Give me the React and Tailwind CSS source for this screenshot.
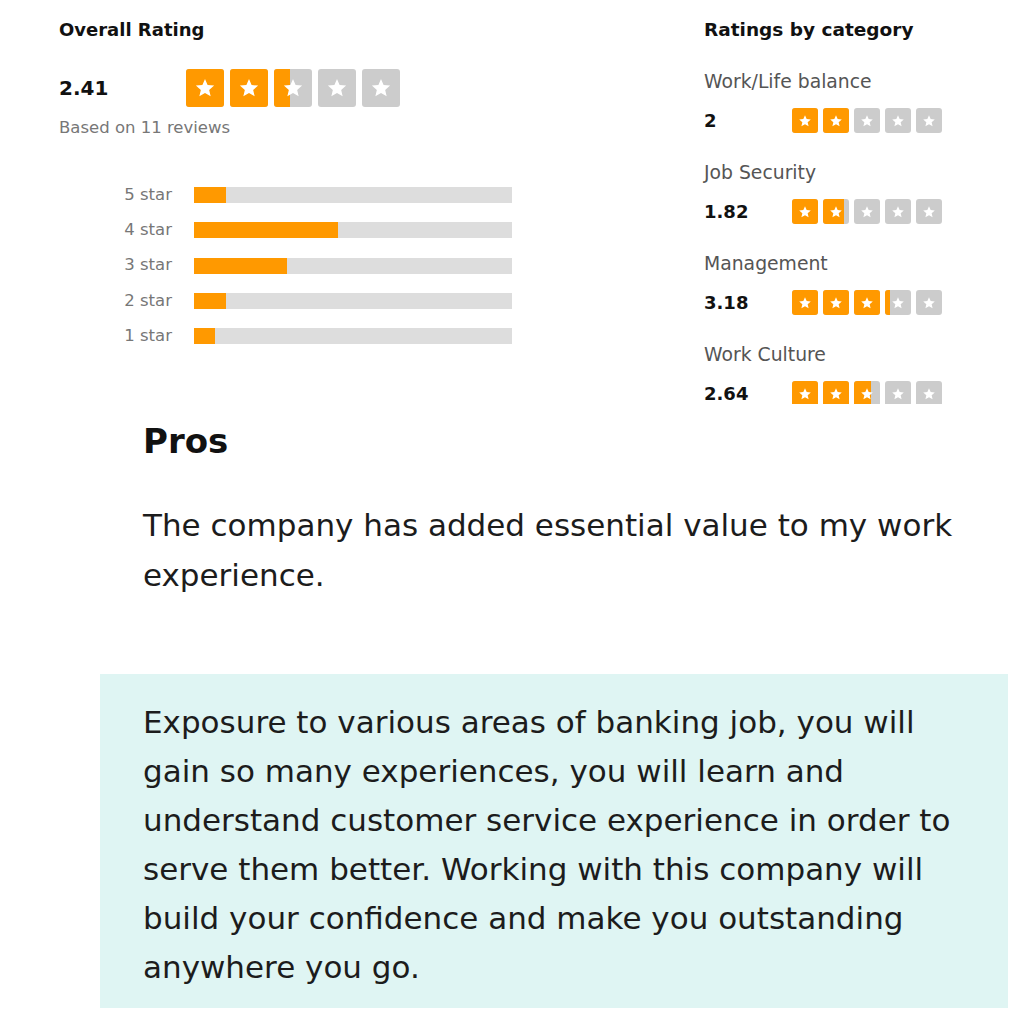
import React from 'react';

const font = { fontFamily: '"DejaVu Sans", Verdana, sans-serif' };

const Star = ({ size }) => (
  <svg viewBox="0 0 24 24" width={size} height={size}>
    <path d="M12 2.2l2.85 6.55 7.1.65-5.4 4.7 1.62 6.95L12 17.4l-6.17 3.65 1.62-6.95-5.4-4.7 7.1-.65z" fill="#ffffff" />
  </svg>
);

const StarBox = ({ fill, big }) => (
  <div
    className={`relative overflow-hidden rounded-[3px] bg-[#cccccc] flex items-center justify-center ${
      big ? 'w-[38px] h-[38px]' : 'w-[26px] h-[25px]'
    }`}
  >
    <div className="absolute inset-y-0 left-0 bg-[#ff9900]" style={{ width: `${fill * 100}%` }} />
    <div className="relative flex">
      <Star size={big ? 22 : 14} />
    </div>
  </div>
);

const Stars = ({ value, big }) => (
  <div className={`flex ${big ? 'gap-[6px]' : 'gap-[5px]'}`}>
    {[0, 1, 2, 3, 4].map((i) => (
      <StarBox key={i} big={big} fill={Math.max(0, Math.min(1, value - i))} />
    ))}
  </div>
);

const bars = [
  { label: '5 star', w: 32 },
  { label: '4 star', w: 144 },
  { label: '3 star', w: 93 },
  { label: '2 star', w: 32 },
  { label: '1 star', w: 21 },
];

const categories = [
  { name: 'Work/Life balance', value: 2, text: '2' },
  { name: 'Job Security', value: 1.82, text: '1.82' },
  { name: 'Management', value: 3.18, text: '3.18' },
  { name: 'Work Culture', value: 2.64, text: '2.64' },
];

export default function App() {
  return (
    <div className="w-[1024px] h-[1024px] bg-white overflow-hidden text-[#1c1c1c]" style={font}>
      {/* ratings summary */}
      <div className="h-[404px] overflow-hidden flex pl-[59px] pt-[20px]">
        <div className="w-[645px]">
          <div className="text-[18px] leading-[20px] font-bold text-[#111]">Overall Rating</div>
          <div className="flex items-center mt-[29px]">
            <div className="w-[127px] text-[20px] font-bold text-[#111]">2.41</div>
            <Stars value={2.41} big />
          </div>
          <div className="mt-[11px] text-[16.5px] leading-[20px] text-[#777]">Based on 11 reviews</div>
          <div className="mt-[49px] flex flex-col gap-[19.3px]">
            {bars.map((b) => (
              <div key={b.label} className="flex items-center h-[16px]">
                <div className="w-[113px] text-right text-[16.5px] text-[#777]">{b.label}</div>
                <div className="ml-[22px] w-[318px] h-[16px] bg-[#dddddd]">
                  <div className="h-full bg-[#ff9900]" style={{ width: b.w }} />
                </div>
              </div>
            ))}
          </div>
        </div>
        <div className="w-[300px]">
          <div className="text-[18.5px] leading-[20px] font-bold text-[#111]">Ratings by category</div>
          <div className="mt-[31px] flex flex-col gap-[29px]">
            {categories.map((c) => (
              <div key={c.name}>
                <div className="text-[18.8px] leading-[22px] text-[#555]">{c.name}</div>
                <div className="flex items-center h-[25px] mt-[15px]">
                  <div className="w-[88px] text-[18px] leading-[25px] font-bold text-[#111]">{c.text}</div>
                  <Stars value={c.value} />
                </div>
              </div>
            ))}
          </div>
        </div>
      </div>

      {/* pros */}
      <div className="pl-[143px] pr-[50px] mt-[17px]">
        <h2 className="text-[34px] leading-[40px] font-bold text-[#111]">Pros</h2>
        <p className="mt-[39px] text-[31px] leading-[50px]">
          The company has added essential value to my work experience.
        </p>
      </div>

      <div className="ml-[100px] mt-[74px] w-[908px] bg-[#dff5f3] pl-[43px] pr-[35px] pt-[24px] pb-[16px]">
        <p className="text-[31px] leading-[49px]">
          Exposure to various areas of banking job, you will gain so many experiences, you will learn and
          understand customer service experience in order to serve them better. Working with this company will
          build your confidence and make you outstanding anywhere you go.
        </p>
      </div>
    </div>
  );
}
